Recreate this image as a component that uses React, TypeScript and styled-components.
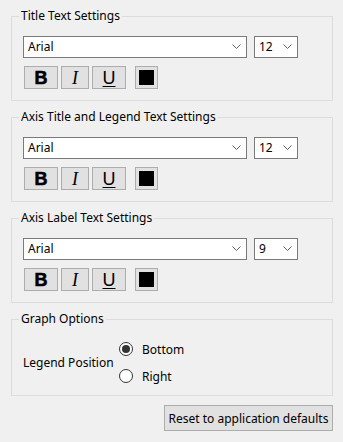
import styled, { createGlobalStyle } from "styled-components";

const GlobalStyle = createGlobalStyle`
    html, body {
        margin: 0;
        padding: 0;
        background: #f0f0f0;
    }
    body {
        font-family: "Noto Sans", "Liberation Sans", sans-serif;
        font-size: 12px;
        color: #000;
    }
`;

const Page = styled.div`
    width: 322px;
    padding: 8px 10px 0 11px;
    display: flex;
    flex-direction: column;
    gap: 8px;
`;

const Group = styled.fieldset<{ $bottom?: number }>`
    margin: 0;
    border: 1px solid #dcdcdc;
    padding: 12px 11px ${(p) => p.$bottom ?? 11}px 11px;
    min-width: 0;

    legend {
        margin-left: -4px;
        padding: 0 2px;
        line-height: 16px;
        height: 16px;
    }
`;

const Row = styled.div<{ $gap: number; $indent?: number }>`
    display: flex;
    align-items: center;
    gap: ${(p) => p.$gap}px;
    margin-left: ${(p) => p.$indent ?? 0}px;
`;

const Stack = styled.div`
    display: flex;
    flex-direction: column;
    gap: 8px;
`;

const Combo = styled.div<{ $width: number }>`
    box-sizing: border-box;
    width: ${(p) => p.$width}px;
    height: 22px;
    border: 1px solid #7a7a7a;
    background: #fff;
    display: flex;
    align-items: center;
    justify-content: space-between;
    padding: 0 5px 0 4px;
    line-height: 16px;
`;

const StyleButton = styled.div<{ $width: number; $space?: number }>`
    box-sizing: border-box;
    width: ${(p) => p.$width}px;
    height: 23px;
    margin-left: ${(p) => p.$space ?? 0}px;
    border: 1px solid #adadad;
    background: #e1e1e1;
    display: flex;
    align-items: center;
    justify-content: center;
    font-size: 18px;
    line-height: 1;
`;

const BoldGlyph = styled.span`
    font-family: "Liberation Sans", Arial, sans-serif;
    font-weight: 900;
    font-size: 18px;
    -webkit-text-stroke: 0.6px #000;
`;

const ItalicGlyph = styled.span`
    font-family: "Liberation Serif", "Times New Roman", serif;
    font-style: italic;
    font-size: 18px;
`;

const UnderGlyph = styled.span`
    font-family: "Liberation Sans", Arial, sans-serif;
    font-size: 18px;
    text-decoration: underline;
    text-decoration-thickness: 1px;
    text-underline-offset: 2px;
`;

const Swatch = styled.span<{ $color: string }>`
    width: 15px;
    height: 15px;
    background: ${(p) => p.$color};
`;

const OptionsGrid = styled.div`
    display: grid;
    grid-template-columns: 96px auto;
    align-items: center;
    white-space: nowrap;
`;

const RadioList = styled.div`
    display: flex;
    flex-direction: column;
    gap: 7px;
`;

const RadioRow = styled.label`
    display: flex;
    align-items: center;
    gap: 9px;
    height: 20px;
`;

const RadioDot = styled.span<{ $checked?: boolean }>`
    box-sizing: border-box;
    width: 14px;
    height: 14px;
    border-radius: 50%;
    border: 1px solid #333;
    background: #fff;
    display: flex;
    align-items: center;
    justify-content: center;

    &::after {
        content: "";
        width: 8px;
        height: 8px;
        border-radius: 50%;
        background: ${(p) => (p.$checked ? "#333" : "transparent")};
    }
`;

const Footer = styled.div`
    display: flex;
    justify-content: flex-end;
    margin-top: 1px;
`;

const ResetButton = styled.button`
    box-sizing: border-box;
    height: 26px;
    width: 169px;
    border: 1px solid #adadad;
    background: #e1e1e1;
    font-family: inherit;
    font-size: 12px;
    color: #000;
    padding: 0;
`;

const Chevron = () => (
    <svg width="9" height="6" viewBox="0 0 9 6">
        <path d="M0.5 0.5 L4.5 4.5 L8.5 0.5" fill="none" stroke="#606060" strokeWidth="1" />
    </svg>
);

const TextSettings = ({ title, size }: { title: string; size: string }) => (
    <Group>
        <legend>{title}</legend>
        <Stack>
            <Row $gap={7}>
                <Combo $width={224}>
                    <span>Arial</span>
                    <Chevron />
                </Combo>
                <Combo $width={44}>
                    <span>{size}</span>
                    <Chevron />
                </Combo>
            </Row>
            <Row $gap={3} $indent={1}>
                <StyleButton $width={34}><BoldGlyph>B</BoldGlyph></StyleButton>
                <StyleButton $width={28}><ItalicGlyph>I</ItalicGlyph></StyleButton>
                <StyleButton $width={34}><UnderGlyph>U</UnderGlyph></StyleButton>
                <StyleButton $width={23} $space={6}>
                    <Swatch $color="#000" />
                </StyleButton>
            </Row>
        </Stack>
    </Group>
);

export default function App() {
    return (
        <>
            <GlobalStyle />
            <Page>
                <TextSettings title="Title Text Settings" size="12" />
                <TextSettings title="Axis Title and Legend Text Settings" size="12" />
                <TextSettings title="Axis Label Text Settings" size="9" />
                <Group $bottom={9}>
                    <legend>Graph Options</legend>
                    <OptionsGrid>
                        <span>Legend Position</span>
                        <RadioList>
                            <RadioRow><RadioDot $checked />Bottom</RadioRow>
                            <RadioRow><RadioDot />Right</RadioRow>
                        </RadioList>
                    </OptionsGrid>
                </Group>
                <Footer>
                    <ResetButton>Reset to application defaults</ResetButton>
                </Footer>
            </Page>
        </>
    );
}
